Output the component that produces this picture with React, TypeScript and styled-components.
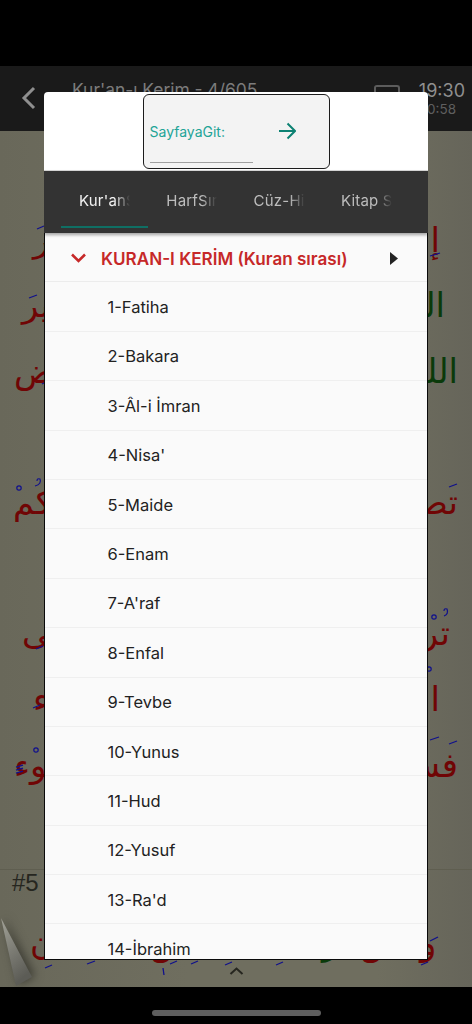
import React from "react";
import styled, { createGlobalStyle } from "styled-components";

const Global = createGlobalStyle`
  html, body { margin: 0; padding: 0; background: #000; }
  body { font-family: Inter, "Liberation Sans", sans-serif; }
`;

const Screen = styled.div`
  position: relative;
  width: 472px;
  height: 1024px;
  overflow: hidden;
  background: #000;
  display: flex;
  flex-direction: column;
`;
const StatusBar = styled.div`
  height: 66px;
  flex: none;
`;
const Header = styled.header`
  height: 65px;
  flex: none;
  background: #1a1a1a;
  display: flex;
  align-items: flex-start;
  padding: 0 7px 0 21px;
  box-sizing: border-box;
`;
const BackIcon = styled.svg`
  width: 16px;
  height: 26px;
  margin-top: 19px;
  flex: none;
`;
const Title = styled.div`
  margin: 12px 0 0 35px;
  flex: 1;
  font-size: 17.4px;
  line-height: 24px;
  color: #7c7c7c;
  white-space: nowrap;
`;
const Clock = styled.div`
  display: flex;
  flex-direction: column;
  align-items: flex-end;
  margin: 14px 0 0 19px;
`;
const ClockMain = styled.span`
  font-size: 18px;
  line-height: 21px;
  color: #8f8f8f;
`;
const ClockSub = styled.span`
  font-size: 13.5px;
  line-height: 16px;
  color: #5f5f5f;
  padding-right: 9px;
`;
const MenuBox = styled.div`
  width: 26px;
  height: 12px;
  margin-top: 19px;
  border: 2px solid #5c5c5c;
  border-bottom: none;
  border-radius: 3px 3px 0 0;
  box-sizing: border-box;
`;
const Reader = styled.main`
  height: 856px;
  flex: none;
  position: relative;
  overflow: hidden;
  background: linear-gradient(90deg, #69685a 0%, #6f6e5f 40%, #6f6e5f 80%, #66655a 100%);
  display: flex;
  flex-direction: column;
`;
const VerseArea = styled.div`
  height: 739px;
  flex: none;
  padding-top: 76px;
  border-bottom: 1px solid #5f5e50;
  box-sizing: border-box;
`;
const VerseLine = styled.div<{ $l?: number; $r?: number }>`
  height: 65.6px;
  display: flex;
  justify-content: space-between;
  align-items: center;
  padding: 0 ${(p) => p.$r ?? 0}px 0 ${(p) => p.$l ?? 0}px;
  font-family: "DejaVu Sans", sans-serif;
  font-size: 34px;
  line-height: 60px;
`;
const Ink = styled.span<{ $c?: string }>`
  color: ${(p) => p.$c ?? "#700505"};
  white-space: nowrap;
  direction: rtl;
  justify-self: start;
`;
const VerseNumber = styled.div`
  font-family: "Liberation Sans", sans-serif;
  font-size: 24px;
  line-height: 26px;
  color: #26261f;
  padding-left: 12px;
`;
const LowerLine = styled.div`
  height: 66px;
  margin-top: 14px;
  display: grid;
  grid-template-columns: 35px 85px 172px 38px 60px auto;
  align-items: center;
  padding-left: 30px;
  font-family: "DejaVu Sans", sans-serif;
  font-size: 34px;
  line-height: 60px;
`;
const BlueMarks = styled.svg`
  position: absolute;
  left: 0;
  top: 0;
  width: 472px;
  height: 1024px;
`;
const Curl = styled.svg`
  position: absolute;
  left: 0;
  bottom: 0;
  width: 36px;
  height: 70px;
  filter: drop-shadow(3px -1px 5px rgba(30, 30, 25, 0.6));
`;
const Caret = styled.svg`
  position: absolute;
  left: 229px;
  bottom: 11px;
  width: 15px;
  height: 10px;
`;
const BottomBar = styled.div`
  flex: 1;
  display: flex;
  justify-content: center;
  align-items: flex-end;
  padding-bottom: 8px;
`;
const HomeIndicator = styled.div`
  width: 169px;
  height: 6px;
  border-radius: 3px;
  background: #5e5e5e;
`;

const Modal = styled.div`
  position: absolute;
  left: 44px;
  top: 92px;
  width: 384px;
  height: 868px;
  display: flex;
  flex-direction: column;
  border-radius: 4px 4px 0 0;
  overflow: hidden;
  background: #fff;
`;
const ModalTop = styled.div`
  height: 79px;
  flex: none;
  display: flex;
  justify-content: center;
  align-items: flex-start;
  padding-top: 2px;
  box-sizing: border-box;
  border-bottom: 1px solid #d8d8d8;
`;
const GoBox = styled.div`
  width: 187px;
  height: 75px;
  box-sizing: border-box;
  border: 1.5px solid #1c1c1c;
  border-radius: 6px;
  background: #f3f3f3;
  padding: 0 5px 0 6px;
  display: flex;
  flex-direction: column;
`;
const GoRow = styled.div`
  display: flex;
  align-items: center;
  height: 66px;
  padding-top: 5px;
  box-sizing: border-box;
`;
const GoLabel = styled.span`
  font-size: 14px;
  color: #22a497;
  width: 128px;
  margin-top: 1px;
`;
const GoArrow = styled.svg`
  width: 18px;
  height: 18px;
`;
const GoLine = styled.div`
  width: 103px;
  height: 1px;
  margin-top: 1px;
  background: #9f9f9f;
`;
const Tabs = styled.nav`
  height: 62px;
  flex: none;
  background: #333333;
  display: flex;
  padding: 0 17px;
  box-shadow: 0 2px 3px rgba(0, 0, 0, 0.35);
  position: relative;
  z-index: 1;
`;
const Tab = styled.div<{ $active?: boolean }>`
  width: 87.3px;
  box-sizing: border-box;
  height: 57px;
  padding: 19px 0 0 18px;
  border-bottom: 2px solid ${(p) => (p.$active ? "#0f6f64" : "transparent")};
`;
const TabLabel = styled.div<{ $active?: boolean }>`
  width: 51px;
  overflow: hidden;
  white-space: nowrap;
  font-size: 15px;
  line-height: 22px;
  letter-spacing: 0.2px;
  color: ${(p) => (p.$active ? "#f2f2f2" : "#bdbdbd")};
  -webkit-mask-image: linear-gradient(90deg, #000 70%, transparent 100%);
  mask-image: linear-gradient(90deg, #000 70%, transparent 100%);
`;
const List = styled.div`
  flex: 1;
  min-height: 0;
  overflow: hidden;
  background: #fafafa;
  border: 1px solid #0a0a0a;
  border-width: 0 1.5px 1.5px 1.5px;
`;
const GroupRow = styled.div`
  height: 49.4px;
  box-sizing: border-box;
  display: flex;
  align-items: center;
  padding: 2px 26px 0 25px;
  border-bottom: 1px solid #ececec;
`;
const Chevron = styled.svg`
  width: 17px;
  height: 10px;
  flex: none;
`;
const GroupTitle = styled.span`
  flex: 1;
  margin-left: 14px;
  font-size: 17.1px;
  font-weight: 600;
  color: #c62828;
  white-space: nowrap;
`;
const Play = styled.svg`
  width: 8px;
  height: 13px;
  flex: none;
  margin-right: 3px;
`;
const Row = styled.div`
  height: 49.4px;
  box-sizing: border-box;
  display: flex;
  align-items: center;
  padding: 1px 0 0 62.5px;
  border-bottom: 1.5px solid #efefef;
  font-size: 16.5px;
  color: #222;
  white-space: nowrap;
`;

const GREEN = "#0a3a0a";
const BLUE = "#10108c";
const verses: { l?: [string, number]; r?: [string, number, string?] }[] = [
  { l: ["كبير", 33], r: ["إليك", 32] },
  { l: ["غير", 22], r: ["الله", 27, GREEN] },
  { l: ["أرض", 14], r: ["الله", 14, GREEN] },
  {},
  { l: ["عليكم", 13], r: ["تصرف", 14] },
  {},
  { l: ["فى", 22], r: ["ترجع", 22] },
  { l: ["سوء", 33], r: ["الأرض", 32] },
  { l: ["سوء", 14], r: ["فسوف", 14] },
];

const dashes: [number, number, number, number][] = [
  [37, 229, 44, 226], [29, 298, 37, 295], [42, 384, 44, 383], [430, 256, 440, 253],
  [449, 487, 457, 484], [36, 649, 43, 646], [33, 708, 40, 705], [16, 767, 23, 765],
  [16, 770, 23, 768], [16, 773, 23, 771], [430, 740, 439, 737], [449, 744, 457, 741],
  [45, 968, 52, 965], [87, 964, 95, 961], [170, 964, 177, 961], [191, 964, 198, 961],
  [225, 965, 232, 962], [276, 965, 283, 962], [421, 965, 428, 962], [430, 941, 438, 937],
  [163, 968, 164, 975],
];
const rings: [number, number][] = [[19, 488], [36, 750], [434, 617], [429, 669]];

const surahs = [
  "1-Fatiha", "2-Bakara", "3-Âl-i İmran", "4-Nisa'", "5-Maide", "6-Enam", "7-A'raf",
  "8-Enfal", "9-Tevbe", "10-Yunus", "11-Hud", "12-Yusuf", "13-Ra'd", "14-İbrahim",
];
const tabs = ["Kur'anSırası", "HarfSırası", "Cüz-Hizip", "Kitap Sırası"];

export default function App() {
  return (
    <Screen>
      <Global />
      <StatusBar />
      <Header>
        <BackIcon viewBox="0 0 16 26">
          <path d="M13 3 L3 13 L13 23" fill="none" stroke="#8f8f8f" strokeWidth="3" />
        </BackIcon>
        <Title>Kur'an-ı Kerim - 4/605</Title>
        <MenuBox />
        <Clock>
          <ClockMain>19:30</ClockMain>
          <ClockSub>0:58</ClockSub>
        </Clock>
      </Header>
      <Reader>
        <VerseArea>
          {verses.map((v, i) => (
            <VerseLine key={i} $l={v.l?.[1]} $r={v.r?.[1]}>
              {v.l && <Ink>{v.l[0]}</Ink>}
              {v.r && <Ink $c={v.r[2]}>{v.r[0]}</Ink>}
            </VerseLine>
          ))}
        </VerseArea>
        <VerseNumber>#5</VerseNumber>
        <LowerLine>
          <Ink>ن</Ink>
          <Ink>ن</Ink>
          <Ink>ص</Ink>
          <Ink $c={GREEN}>ر</Ink>
          <Ink>ص</Ink>
          <Ink>و</Ink>
        </LowerLine>
        <Curl viewBox="0 0 36 70">
          <defs>
            <linearGradient id="curl" x1="0" y1="0" x2="0.4" y2="1">
              <stop offset="0" stopColor="#a2a298" />
              <stop offset="1" stopColor="#5c5c56" />
            </linearGradient>
          </defs>
          <path d="M1 1 L32 60 L16 69 Z" fill="url(#curl)" />
        </Curl>
        <Caret viewBox="0 0 15 10">
          <path d="M1.5 8 L7.5 2.5 L13.5 8" fill="none" stroke="#26261f" strokeWidth="2" />
        </Caret>
      </Reader>
      <BottomBar>
        <HomeIndicator />
      </BottomBar>
      <BlueMarks viewBox="0 0 472 1024">
        {dashes.map(([a, b, c, d]) => (
          <line key={`${a}-${b}`} x1={a} y1={b} x2={c} y2={d} stroke={BLUE} strokeWidth="1.3" />
        ))}
        {rings.map(([x, y]) => (
          <circle key={x} cx={x} cy={y} r="2.2" fill="none" stroke={BLUE} strokeWidth="1.2" />
        ))}
        <path d="M35 486 Q42 484 40 479 Q37 478 37 481" fill="none" stroke={BLUE} strokeWidth="1.2" />
        <path d="M444 616 Q449 614 447 609 Q444 608 444 611" fill="none" stroke={BLUE} strokeWidth="1.2" />
      </BlueMarks>
      <Modal>
        <ModalTop>
          <GoBox>
            <GoRow>
              <GoLabel>SayfayaGit:</GoLabel>
              <GoArrow viewBox="0 0 18 18">
                <path d="M1 9 H16.5 M9.5 1.5 L17 9 L9.5 16.5" fill="none" stroke="#0d8273" strokeWidth="2" />
              </GoArrow>
            </GoRow>
            <GoLine />
          </GoBox>
        </ModalTop>
        <Tabs>
          {tabs.map((t, i) => (
            <Tab key={t} $active={i === 0}>
              <TabLabel $active={i === 0}>{t}</TabLabel>
            </Tab>
          ))}
        </Tabs>
        <List>
          <GroupRow>
            <Chevron viewBox="0 0 17 10">
              <path d="M2 1.5 L8.5 8 L15 1.5" fill="none" stroke="#c62828" strokeWidth="2.6" />
            </Chevron>
            <GroupTitle>KURAN-I KERİM (Kuran sırası)</GroupTitle>
            <Play viewBox="0 0 8 13">
              <path d="M0 0 L8 6.5 L0 13 Z" fill="#222" />
            </Play>
          </GroupRow>
          {surahs.map((s) => (
            <Row key={s}>{s}</Row>
          ))}
        </List>
      </Modal>
    </Screen>
  );
}
